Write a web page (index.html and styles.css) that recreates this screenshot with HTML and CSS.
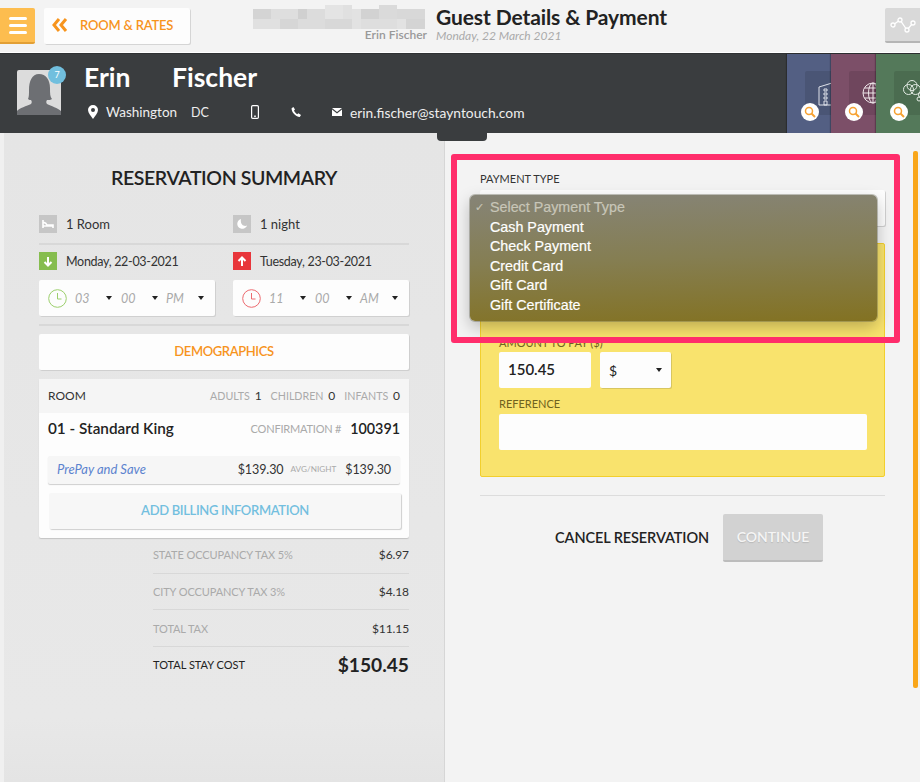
FILE: index.html
```html
<!DOCTYPE html>
<html lang="en">
<head>
<meta charset="utf-8">
<title>Guest Details &amp; Payment</title>
<link rel="stylesheet" href="styles.css">
</head>
<body>
<div class="page">
  <header class="topbar">
    <button class="menu-btn" aria-label="Menu"><span></span><span></span><span></span></button>
    <button class="back-btn">
      <svg width="16" height="14" viewBox="0 0 16 14"><path d="M7 1 2 7l5 6M14 1 9 7l5 6" fill="none" stroke="#f7941d" stroke-width="3"/></svg>
      <span>ROOM &amp; RATES</span>
    </button>
    <div class="hotel">
      <svg class="pixels" width="172" height="24" viewBox="0 0 172 24">
        <rect width="172" height="20" y="4" fill="#e2e2e2"/>
        <rect x="0" y="4" width="18" height="10" fill="#d4d4d4"/><rect x="18" y="4" width="27" height="10" fill="#dedede"/>
        <rect x="45" y="4" width="27" height="20" fill="#dcdcdc"/><rect x="45" y="4" width="9" height="10" fill="#d0d0d0"/>
        <rect x="72" y="0" width="18" height="14" fill="#e4e4e4"/><rect x="90" y="0" width="9" height="14" fill="#e0e0e0"/>
        <rect x="108" y="4" width="18" height="10" fill="#d2d2d2"/><rect x="126" y="0" width="18" height="14" fill="#dadada"/><rect x="144" y="4" width="28" height="10" fill="#d8d8d8"/>
        <rect x="0" y="14" width="27" height="10" fill="#e0e0e0"/><rect x="27" y="14" width="18" height="10" fill="#d6d6d6"/><rect x="72" y="14" width="27" height="10" fill="#d8d8d8"/><rect x="108" y="14" width="36" height="10" fill="#dedede"/><rect x="153" y="14" width="19" height="10" fill="#d4d4d4"/>
      </svg>
      <span class="guest-small">Erin Fischer</span>
    </div>
    <div class="title-block">
      <h1>Guest Details &amp; Payment</h1>
      <span class="date-small">Monday, 22 March 2021</span>
    </div>
    <button class="graph-btn" aria-label="Graph">
      <svg width="26" height="16" viewBox="0 0 26 16"><path d="M3 8 10 3l7 10 6-7" fill="none" stroke="#fff" stroke-width="1.3"/><circle cx="3" cy="8" r="2" fill="#d6d6d6" stroke="#fff" stroke-width="1.3"/><circle cx="10" cy="3" r="2" fill="#d6d6d6" stroke="#fff" stroke-width="1.3"/><circle cx="17" cy="13" r="2" fill="#d6d6d6" stroke="#fff" stroke-width="1.3"/><circle cx="23" cy="6" r="2" fill="#d6d6d6" stroke="#fff" stroke-width="1.3"/></svg>
    </button>
  </header>

  <section class="guest-bar">
    <div class="avatar">
      <svg width="44" height="45" viewBox="0 0 44 45"><rect width="44" height="45" rx="2" fill="#dcdcdc"/><path d="M0 45v-4c2-3 10-5 14-7 1-1 1-3 0-4-1 0-2 0-3-1 1-2 1-5 1-9C12 11 15 4 22 4s11 6 11 14c0 5 0 9 2 11-1 1-3 1-5 1-1 1-1 3 0 4 4 2 11 4 14 7v4z" fill="#6d6f73"/></svg>
      <span class="badge">7</span>
    </div>
    <div class="guest-info">
      <div class="guest-name"><span>Erin</span><span>Fischer</span></div>
      <div class="guest-meta">
        <svg class="i-pin" width="10" height="14" viewBox="0 0 10 14"><path fill-rule="evenodd" d="M5 0a5 5 0 0 1 5 5c0 3-3 6-5 9-2-3-5-6-5-9a5 5 0 0 1 5-5zm0 3a2 2 0 1 0 0 4 2 2 0 0 0 0-4z" fill="#fff"/></svg>
        <span class="city">Washington</span><span class="state">DC</span>
        <svg class="i-phone" width="8" height="14" viewBox="0 0 8 14"><rect x=".6" y=".6" width="6.8" height="12.8" rx="1.2" fill="none" stroke="#fff" stroke-width="1.2"/><rect x="3" y="10.6" width="2" height="1.2" fill="#fff"/></svg>
        <svg class="i-tel" width="10" height="10" viewBox="0 0 10 10"><path d="M2.4 0 .6 1.2C.2 4.600 4.400 9.800 8.800 10L10 8 7.400 6.200 6.200 7.200C4.800 6.600 3.400 5 3 3.600L4 2.600z" fill="#fff"/></svg>
        <svg class="i-mail" width="10" height="8" viewBox="0 0 10 8"><path d="M0 0h10L5 4zM0 1.500 5 5.400l5-3.900V8H0z" fill="#fff"/></svg>
        <span class="email">erin.fischer@stayntouch.com</span>
      </div>
    </div>
    <div class="cards">
      <div class="card card-blue"><div class="tile">
        <svg class="tile-icon" width="20" height="24" viewBox="0 0 20 24"><path d="M1 5 14 1v22H1zM14 6h5v17h-5" fill="none" stroke="#dfe2ea" stroke-width="1"/><path d="M6 7h3v2H6zM6 11h3v2H6zM6 15h3v2H6zM6 19h3v4H6z" fill="none" stroke="#dfe2ea"/></svg>
      </div><span class="lens"><svg width="12" height="12" viewBox="0 0 12 12"><circle cx="5" cy="5" r="3.500" fill="none" stroke="#f7a233" stroke-width="1.500"/><path d="m7.500 7.500 3.500 3.500" stroke="#f7a233" stroke-width="2"/></svg></span></div>
      <div class="card card-purple"><div class="tile">
        <svg class="tile-icon" width="22" height="22" viewBox="0 0 22 22"><g fill="none" stroke="#efe6ea"><circle cx="11" cy="11" r="10"/><ellipse cx="11" cy="11" rx="4.500" ry="10"/><path d="M11 1v20M1 11h20M2.500 6h17M2.500 16h17"/></g></svg>
      </div><span class="lens"><svg width="12" height="12" viewBox="0 0 12 12"><circle cx="5" cy="5" r="3.500" fill="none" stroke="#f7a233" stroke-width="1.500"/><path d="m7.500 7.500 3.500 3.500" stroke="#f7a233" stroke-width="2"/></svg></span></div>
      <div class="card card-green"><div class="tile">
        <svg class="tile-icon tile-rings" width="28" height="24" viewBox="0 0 28 24"><g fill="none" stroke="#e4ece5"><circle cx="9" cy="5.500" r="5"/><circle cx="5.500" cy="9.500" r="5"/><circle cx="12.500" cy="9.500" r="5"/><circle cx="18" cy="15" r="2.500"/><circle cx="16" cy="19" r="2"/></g></svg>
      </div><span class="lens"><svg width="12" height="12" viewBox="0 0 12 12"><circle cx="5" cy="5" r="3.500" fill="none" stroke="#f7a233" stroke-width="1.500"/><path d="m7.500 7.500 3.500 3.500" stroke="#f7a233" stroke-width="2"/></svg></span></div>
    </div>
    <span class="handle"></span>
  </section>

  <main class="content">
    <aside class="summary">
      <h2>RESERVATION SUMMARY</h2>
      <div class="two-col row-top">
        <div class="icon-row"><span class="sq sq-grey"><svg width="12" height="8" viewBox="0 0 12 8"><path d="M1 0v8M1 3c2-1 3 0 4 2h6v3M1 6h10" fill="none" stroke="#fff" stroke-width="1.600"/></svg></span>1 Room</div>
        <div class="icon-row"><span class="sq sq-grey"><svg width="10" height="10" viewBox="0 0 10 10"><path d="M4 0a5 5 0 1 0 6 6.500C6.500 8 3 5 4 0z" fill="#fff"/></svg></span>1 night</div>
      </div>
      <hr class="rule rule-a">
      <div class="two-col row-dates">
        <div class="icon-row"><span class="sq sq-green"><svg width="10" height="11" viewBox="0 0 10 11"><path d="M5 1v8M1.500 6 5 9.500 8.500 6" fill="none" stroke="#fff" stroke-width="2"/></svg></span>Monday, 22-03-2021</div>
        <div class="icon-row"><span class="sq sq-red"><svg width="10" height="11" viewBox="0 0 10 11"><path d="M5 10V2M1.500 5 5 1.500 8.500 5" fill="none" stroke="#fff" stroke-width="2"/></svg></span>Tuesday, 23-03-2021</div>
      </div>
      <div class="two-col row-times">
        <div class="time-box">
          <svg class="clock" width="19" height="19" viewBox="0 0 19 19"><circle cx="9.500" cy="9.500" r="8.800" fill="none" stroke="#9ccf6c" stroke-width="1"/><path d="M9.500 4v6h4" fill="none" stroke="#9ccf6c"/></svg>
          <span class="t t1">03</span><i class="caret"></i><span class="t t2">00</span><i class="caret"></i><span class="t t3">PM</span><i class="caret"></i>
        </div>
        <div class="time-box">
          <svg class="clock" width="19" height="19" viewBox="0 0 19 19"><circle cx="9.500" cy="9.500" r="8.800" fill="none" stroke="#ec6a6f" stroke-width="1"/><path d="M9.500 4v6h4" fill="none" stroke="#ec6a6f"/></svg>
          <span class="t t1">11</span><i class="caret"></i><span class="t t2">00</span><i class="caret"></i><span class="t t3">AM</span><i class="caret"></i>
        </div>
      </div>
      <hr class="rule rule-b">
      <button class="demo-btn">DEMOGRAPHICS</button>
      <div class="room-card">
        <div class="room-head">
          <span class="room-label">ROOM</span>
          <span class="occ">ADULTS <b>1</b></span><span class="occ">CHILDREN <b>0</b></span><span class="occ">INFANTS <b>0</b></span>
        </div>
        <div class="room-title">
          <span class="room-name">01 - Standard King</span>
          <span class="conf">CONFIRMATION #</span><span class="conf-no">100391</span>
        </div>
        <div class="rate-bar">
          <span class="rate-name">PrePay and Save</span>
          <span class="price">$139.30</span><span class="avg">AVG/NIGHT</span><span class="price">$139.30</span>
        </div>
        <button class="billing-btn">ADD BILLING INFORMATION</button>
      </div>
      <div class="taxes">
        <div class="tax-row"><span>STATE OCCUPANCY TAX 5%</span><b>$6.97</b></div>
        <div class="tax-row"><span>CITY OCCUPANCY TAX 3%</span><b>$4.18</b></div>
        <div class="tax-row"><span>TOTAL TAX</span><b>$11.15</b></div>
        <div class="total-row"><span>TOTAL STAY COST</span><b>$150.45</b></div>
      </div>
    </aside>

    <section class="payment">
      <label class="pay-label">PAYMENT TYPE</label>
      <div class="pay-select"></div>
      <div class="yellow">
        <label class="y-label">AMOUNT TO PAY ($)</label>
        <div class="amount-row">
          <div class="amount">150.45</div>
          <div class="currency"><span>$</span><i class="caret"></i></div>
        </div>
        <label class="y-label ref-label">REFERENCE</label>
        <div class="ref-input"></div>
      </div>
      <hr class="pay-rule">
      <div class="actions">
        <span class="cancel">CANCEL RESERVATION</span>
        <button class="continue">CONTINUE</button>
      </div>
    </section>
    <span class="scroll"></span>
  </main>

  <div class="frame"></div>
  <ul class="dropdown">
    <li class="dim"><span class="check">✓</span>Select Payment Type</li>
    <li>Cash Payment</li>
    <li>Check Payment</li>
    <li>Credit Card</li>
    <li>Gift Card</li>
    <li>Gift Certificate</li>
  </ul>
</div>
</body>
</html>
```

FILE: styles.css
```css
* { box-sizing: border-box; }
html, body { margin: 0; padding: 0; }
body { font-family: "Lato", "Noto Sans", sans-serif; color: #222; background: #f3f3f3; }
button { font-family: inherit; border: 0; padding: 0; }
h1, h2, ul { margin: 0; padding: 0; }
hr { border: 0; margin: 0; }
.page { position: relative; width: 920px; height: 782px; overflow: hidden; }

/* top bar */
.topbar { display: flex; align-items: flex-start; height: 53px; background: #f3f3f3; border-bottom: 1px solid #fff; }
.menu-btn { display: flex; flex-direction: column; justify-content: center; gap: 4px; align-items: center; width: 35px; height: 36px; margin-top: 8px; background: #fdbd4f; border-bottom: 2px solid #e29f35; border-radius: 0 2px 2px 0; }
.menu-btn span { width: 18px; height: 3px; background: #fff; border-radius: 2px; }
.back-btn { display: flex; align-items: center; gap: 12px; width: 146px; height: 36px; margin: 8px 0 0 9px; padding: 0 0 3px 8px; background: #fdfdfd; color: #f7941d; font-size: 13px; font-weight: 600; letter-spacing: -.2px; border-radius: 2px; box-shadow: 1px 1px 0 #d5d5d5; }
.hotel { display: flex; flex-direction: column; align-items: flex-end; width: 172px; margin: 5px 0 0 63px; }
.pixels { display: block; }
.guest-small { font-size: 12px; color: #999; margin: -1px -2px 0 0; line-height: 14px; font-weight: 600; }
.title-block { display: flex; flex-direction: column; margin: 4px 0 0 11px; flex: 1; }
h1 { font-size: 21px; line-height: 25px; font-weight: 700; color: #222; letter-spacing: -.1px; }
.date-small { font-size: 12px; line-height: 14px; font-style: italic; color: #aaa; }
.graph-btn { width: 35px; height: 35px; margin-top: 8px; background: #d9d9d9; border-bottom: 2px solid #b5b5b5; border-radius: 2px 0 0 2px; display: flex; align-items: center; justify-content: center; }

/* guest bar */
.guest-bar { position: relative; display: flex; height: 80px; background: #3a3d3f; color: #fff; border-top: 1px solid #2f3133; }
.avatar { position: relative; width: 44px; height: 45px; margin: 16px 0 0 17px; }
.avatar svg { display: block; }
.badge { position: absolute; left: 31px; top: -4px; width: 18px; height: 18px; border-radius: 50%; background: #71bfde; color: #fff; font-size: 9px; line-height: 18px; text-align: center; }
.guest-info { margin-left: 23px; flex: 1; }
.guest-name { display: flex; gap: 41.500px; font-size: 26.500px; line-height: 34px; font-weight: 700; margin-top: 6px; }
.guest-meta { display: flex; align-items: center; margin-top: 8px; height: 20px; font-size: 13.500px; color: #eee; }
.i-pin { margin: 0 8px 0 4px; }
.city { width: 85px; }
.state { width: 60px; font-size: 12.500px; }
.i-phone { margin-right: 32px; }
.i-tel { margin-right: 31px; }
.i-mail { margin-right: 8px; }
.email { font-size: 13.800px; }
.cards { display: flex; width: 133px; }
.card { position: relative; width: 44.400px; overflow: hidden; box-shadow: -1px 0 1px rgba(0,0,0,.25); }
.card-blue { background: #535f83; }
.card-purple { background: #7c4f68; }
.card-green { background: #54795a; }
.tile { width: 60px; height: 44px; margin: 17px 0 0 18px; background: rgba(0,0,0,.1); border-radius: 2px; padding: 11px 0 0 13px; }
.tile-icon { display: block; overflow: visible; }
.tile-rings { margin: -2px 0 0 -4px; }
.lens { position: absolute; left: 14px; top: 49px; width: 18px; height: 18px; border-radius: 50%; background: #fff; display: flex; align-items: center; justify-content: center; }
.handle { position: absolute; left: 437px; top: 78px; width: 50px; height: 9px; background: #3a3d3f; border-radius: 0 0 4px 4px; z-index: 2; }

/* content */
.content { position: relative; display: flex; height: 649px; }
.summary { width: 445px; padding: 31px 35px 0 35px; border-left: 4px solid #f0f0f0; border-right: 1px solid #d6d6d6; background: linear-gradient(180deg, #e5e5e5 0, #e8e8e8 90%, #e4e4e4 100%); }
h2 { font-size: 19.500px; line-height: 28px; font-weight: 600; text-align: center; color: #222; letter-spacing: -.4px; }
.two-col { display: flex; gap: 18px; }
.two-col > * { width: 176px; }
.icon-row { display: flex; align-items: center; gap: 9px; height: 18px; font-size: 13px; color: #333; }
.sq { display: flex; align-items: center; justify-content: center; width: 18px; height: 18px; flex: none; }
.sq-grey { background: #c6c6c6; }
.sq-green { background: #86bd4f; }
.sq-red { background: #e8363b; }
.row-top { margin-top: 23px; }
.rule { height: 2px; background: #d8d8d8; }
.rule-a { margin-top: 10px; }
.row-dates { margin-top: 7px; }
.row-dates .icon-row { font-size: 12.500px; letter-spacing: -.3px; }
.row-times { margin-top: 10px; }
.time-box { display: flex; align-items: center; height: 36px; padding-left: 9px; background: #fdfdfd; border-radius: 2px; box-shadow: 1px 1px 0 #d0d0d0; font-size: 12.500px; font-style: italic; color: #aaa; }
.two-col > .time-box { width: 176px; }
.clock { margin-right: 8px; flex: none; }
.t { display: block; }
.t1 { width: 31px; }
.t2 { width: 31px; margin-left: 9px; }
.t3 { width: 32px; margin-left: 8px; }
.caret { display: block; width: 0; height: 0; border: 3.500px solid transparent; border-top: 4px solid #222; border-bottom: 0; }
.rule-b { margin-top: 8px; }
.demo-btn { display: block; width: 100%; height: 36px; margin-top: 8px; padding-bottom: 2px; background: #fdfdfd; color: #f7941d; font-size: 13px; font-weight: 600; letter-spacing: -.4px; border-radius: 2px; box-shadow: 1px 1px 0 #cfcfcf; }
.room-card { margin-top: 9px; height: 159px; background: #fdfdfd; border-radius: 2px; box-shadow: 0 1px 1px #c4c4c4; }
.room-head { display: flex; align-items: center; height: 34px; padding: 0 9px 2px; background: #f5f5f5; font-size: 10.700px; color: #aaa; }
.room-label { color: #333; flex: 1; font-size: 12px; }
.occ { margin-left: 9px; }
.occ b { font-weight: 400; color: #333; margin-left: 2px; font-size: 12px; }
.room-title { display: flex; align-items: center; height: 32px; padding: 0 9px 2px; }
.room-name { flex: 1; font-size: 15.300px; font-weight: 600; color: #222; }
.conf { font-size: 11px; color: #aaa; letter-spacing: -.2px; }
.conf-no { font-size: 14.300px; font-weight: 600; margin-left: 9px; }
.rate-bar { display: flex; align-items: center; height: 28px; margin: 11px 0 0 9px; width: 352px; padding: 0 9px 2px; background: #f6f6f6; border-radius: 2px; box-shadow: 0 1px 1px #cfcfcf; }
.rate-name { flex: 1; font-style: italic; color: #5c83cf; font-size: 13px; }
.price { color: #333; font-size: 12.500px; letter-spacing: -.1px; }
.avg { font-size: 8.200px; color: #aaa; margin: 0 9px 0 7px; }
.billing-btn { display: block; width: 352px; height: 36px; margin: 9px 0 0 10px; padding-bottom: 3px; background: #f7f7f7; color: #73bfdf; font-size: 13px; font-weight: 600; letter-spacing: -.35px; border-radius: 2px; box-shadow: 1px 1px 1px #cfcfcf; }
.taxes { margin: -1px 0 0 114px; }
.tax-row { display: flex; justify-content: space-between; align-items: center; height: 36.700px; border-bottom: 1px solid #d8d8d8; font-size: 11px; color: #aaa; letter-spacing: -.1px; }
.tax-row b { font-weight: 400; font-size: 12px; color: #333; letter-spacing: -.1px; }
.total-row { display: flex; justify-content: space-between; align-items: center; height: 36px; padding-bottom: 2px; font-size: 11px; color: #222; }
.total-row b { font-size: 19.200px; font-weight: 700; color: #222; }

/* payment */
.payment { flex: 1; padding: 38px 35px 0 35px; background: #f3f3f3; }
.pay-label { display: block; font-size: 11px; line-height: 16px; color: #333; }
.pay-select { height: 36px; margin-top: 3px; background: #fdfdfd; border-radius: 2px; box-shadow: 1px 1px 0 #d0d0d0; }
.yellow { height: 234px; margin-top: 17px; padding: 91px 17px 0 18px; background: #f9e36d; border: 1px solid #f2cf2d; border-radius: 2px; }
.y-label { display: block; font-size: 11px; line-height: 16px; color: #6f6220; }
.amount-row { display: flex; gap: 9px; margin-top: 1px; }
.amount { width: 92px; height: 36px; padding-left: 9px; background: #fdfdfd; border-radius: 2px; font-size: 15px; font-weight: 600; line-height: 34px; color: #222; }
.currency { display: flex; align-items: center; justify-content: space-between; width: 71px; height: 36px; padding: 0 9px; background: #fdfdfd; border-radius: 2px; box-shadow: 1px 1px 0 #d8c660; font-size: 14px; }
.ref-label { margin-top: 8px; }
.ref-input { height: 36px; margin-top: 2px; background: #fdfdfd; border-radius: 2px; }
.pay-rule { height: 1px; margin-top: 18px; background: #dcdcdc; }
.actions { display: flex; justify-content: flex-end; align-items: center; gap: 14px; margin: 18px 62px 0 0; }
.cancel { font-size: 14.500px; font-weight: 600; color: #222; letter-spacing: -.1px; margin-top: -2px; }
.continue { width: 100px; height: 48px; padding-bottom: 2px; background: #d2d2d2; border-bottom: 2px solid #bcbcbc; border-radius: 2px; color: #f5f5f5; font-size: 14px; font-weight: 600; text-shadow: 0 1px 1px rgba(0,0,0,.12); }
.scroll { position: absolute; left: 913px; top: 18px; width: 5px; height: 537px; background: #f9a61a; border-radius: 2px; }

/* overlays */
.frame { position: absolute; left: 451px; top: 154px; width: 449px; height: 189px; border: 6px solid #ff2d6b; border-radius: 3px; z-index: 4; }
.dropdown { position: absolute; left: 470px; top: 195px; width: 407px; height: 126px; padding: 3px 0 0 20px; list-style: none; background: linear-gradient(178deg, #868477 0, #857e52 50%, #837222 100%); border-radius: 5px; box-shadow: 0 0 0 1px rgba(90,90,70,.35), 0 6px 16px rgba(0,0,0,.25); font-family: "Liberation Sans", Arial, sans-serif; font-size: 14.300px; line-height: 19.600px; color: #fff; -webkit-text-stroke: .2px; z-index: 3; }
.dropdown li { position: relative; }
.dropdown .dim { color: #c8c6b8; }
.check { position: absolute; left: -15px; font-size: 11px; }
```
